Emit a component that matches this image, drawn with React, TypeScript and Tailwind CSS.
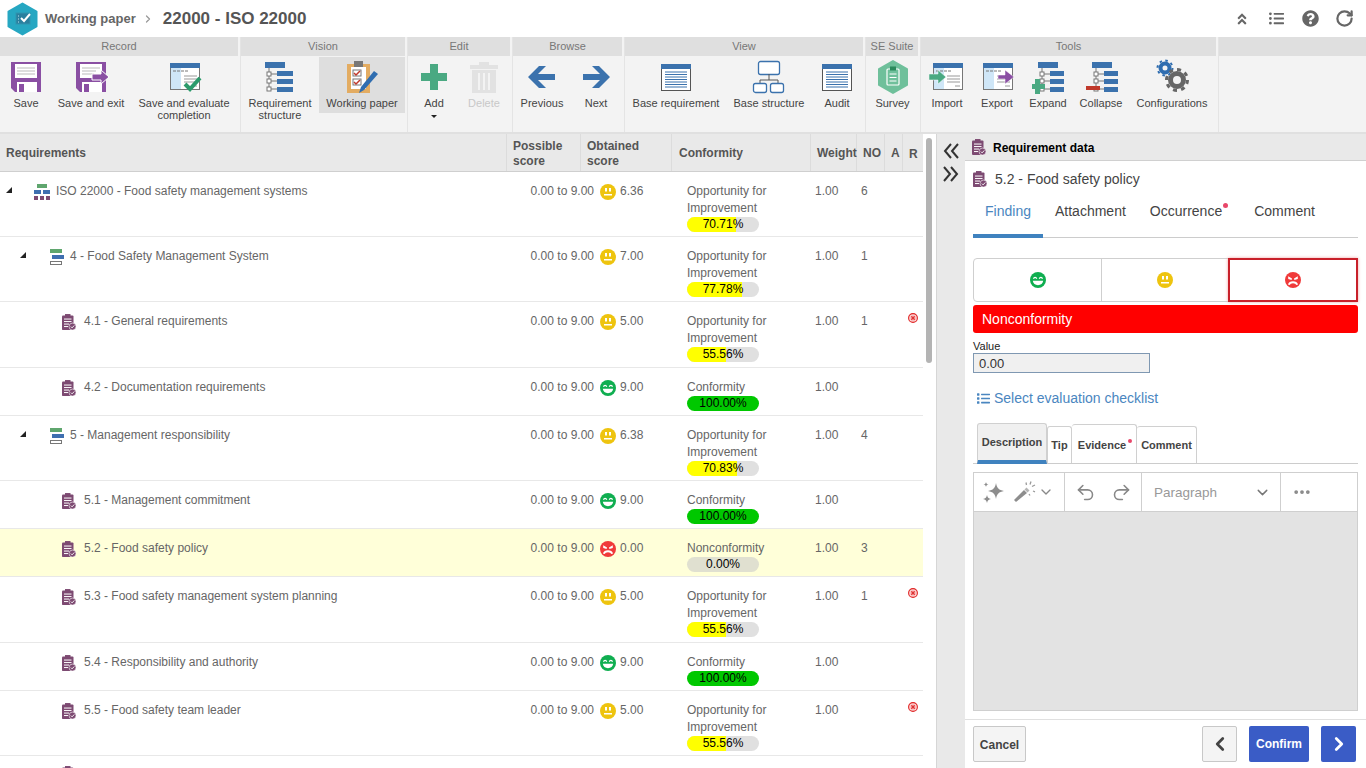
import React from "react";
import { ChevronDown, Undo2, Redo2, Ellipsis, ChevronLeft, ChevronRight, ChevronRight as Crumb, RotateCw } from "lucide-react";
import { FaAngleDoubleUp, FaListUl, FaList, FaQuestionCircle } from "react-icons/fa";

const BLUE = "#3b72ad";
const PURPLE = "#8a4fa3";
const GREEN = "#4aa982";

const Box = ({ children }: { children: React.ReactNode }) => (
  <svg width="36" height="36" viewBox="0 0 36 36">{children}</svg>
);

const TreeBase = ({ w = 16 }: { w?: number }) => (
  <g>
    <rect x="0" y="3" width="20" height="6" fill={BLUE} />
    <path d="M4 9V31M4 15h8M4 22h8M4 30h8" stroke="#777" fill="none" />
    <rect x="2" y="13" width="4" height="4" fill="#fff" stroke="#777" />
    <rect x="2" y="20" width="4" height="4" fill="#fff" stroke="#777" />
    <rect x="2" y="28" width="4" height="4" fill="#fff" stroke="#777" />
    <rect x="12" y="12" width={w} height="5" fill={BLUE} />
    <rect x="12" y="20" width={w} height="5" fill={BLUE} />
    <rect x="12" y="28" width={w} height="5" fill={BLUE} />
  </g>
);
const Window = ({ side }: { side?: boolean }) => (
  <g>
    <rect x="4.500" y="4.500" width="29" height="26" fill="#fff" stroke="#777" />
    <rect x="4" y="4" width="30" height="5" fill={BLUE} />
    {side && <rect x="5" y="9" width="10" height="21" fill="#cfe6f7" />}
    <path d="M7 12h3M11 12h3M15 12h3M19 12h3" stroke="#777" />
    <path d="M18 17h13M18 20h13M18 23h13M26 27h5" stroke="#999" />
  </g>
);
const Lined = () => (
  <g>
    <rect x="3.500" y="5.500" width="29" height="26" fill="#fff" stroke="#555" />
    <rect x="3" y="5" width="30" height="5" fill={BLUE} />
    <path d="M7 13h22M7 15.500h22M7 18h22M7 20.500h22M7 23h22M7 25.500h22M7 28h22" stroke={BLUE} />
  </g>
);

const icons: Record<string, React.ReactNode> = {
  save: (
    <Box>
      <path d="M3 3h30v30H7l-4-4z" fill={PURPLE} />
      <rect x="7" y="5" width="22" height="14" fill="#fff" />
      <path d="M9 9h18M9 12h18M9 15h18" stroke="#bbb" />
      <rect x="9" y="23" width="20" height="10" fill="#fff" />
      <rect x="11" y="25" width="5" height="8" fill={PURPLE} />
    </Box>
  ),
  saveExit: (
    <Box>
      <path d="M3 3h30v30H7l-4-4z" fill={PURPLE} />
      <rect x="7" y="5" width="22" height="14" fill="#fff" />
      <path d="M9 9h18M9 12h14M9 15h12" stroke="#bbb" />
      <rect x="9" y="23" width="20" height="10" fill="#fff" />
      <rect x="11" y="25" width="5" height="8" fill={PURPLE} />
      <path d="M19 15h9v-4l8 7-8 7v-4h-9z" fill={PURPLE} stroke="#fff" />
    </Box>
  ),
  saveEval: (
    <Box>
      <Window side />
      <path d="M19 25l5 5 10-11" stroke="#2b9a6b" strokeWidth="4" fill="none" />
    </Box>
  ),
  reqStruct: <Box><g transform="translate(3 0)"><TreeBase /></g></Box>,
  workingPaper: (
    <Box>
      <rect x="3" y="5" width="23" height="29" fill="#e3ac62" />
      <rect x="7" y="8" width="15" height="22" fill="#fff" />
      <rect x="10" y="2" width="9" height="6" fill="#777" />
      <rect x="9" y="11" width="8" height="6" fill="#fff" stroke="#777" />
      <rect x="9" y="20" width="8" height="6" fill="#fff" stroke="#777" />
      <path d="M10 14l2 2 4-4M10 23l2 2 4-4" stroke="#c0392b" strokeWidth="1.500" fill="none" />
      <path d="M15 34l2-6L30 12l4 3-14 16z" fill="#2f6db0" />
    </Box>
  ),
  add: <Box><path d="M14 5h8v9h9v8h-9v9h-8v-9H5v-8h9z" fill={GREEN} /></Box>,
  del: (
    <Box>
      <rect x="4" y="6" width="28" height="4" fill="#e2e2e2" />
      <rect x="13" y="3" width="10" height="4" fill="#e2e2e2" />
      <path d="M6 11h24v23H6z" fill="#e2e2e2" />
      <path d="M13 14v17M18 14v17M23 14v17" stroke="#f3f3f3" strokeWidth="2" />
    </Box>
  ),
  prev: <Box><path d="M4 18L15 7h7l-8 8h17v6H14l8 8h-7z" fill={BLUE} /></Box>,
  next: <Box><path d="M32 18L21 7h-7l8 8H5v6h17l-8 8h7z" fill={BLUE} /></Box>,
  base: <Box><Lined /></Box>,
  baseStruct: (
    <Box>
      <rect x="7.500" y="2.500" width="21" height="13" rx="2" fill="#fff" stroke={BLUE} strokeWidth="1.300" />
      <path d="M18 15v6M9 21h18M9 21v3M27 21v3" stroke="#555" fill="none" />
      <rect x="2.500" y="24.500" width="13" height="9" rx="2" fill="#fff" stroke={BLUE} strokeWidth="1.300" />
      <rect x="19.500" y="24.500" width="13" height="9" rx="2" fill="#fff" stroke={BLUE} strokeWidth="1.300" />
    </Box>
  ),
  survey: (
    <Box>
      <path d="M18 2l14 8v16l-14 8-14-8V10z" fill="#6fc09b" stroke="#6fc09b" strokeWidth="2" strokeLinejoin="round" />
      <rect x="12" y="10" width="12" height="16" rx="1" fill="none" stroke="#fff" strokeWidth="1.200" />
      <rect x="15" y="7.500" width="6" height="4" fill="#2b8a5c" />
      <path d="M14.500 15h7M14.500 18.500h7M14.500 22h7" stroke="#fff" />
    </Box>
  ),
  importI: (
    <Box>
      <Window side />
      <path d="M0 15h9v-4l8 7-8 7v-4H0z" fill={GREEN} stroke="#fff" strokeWidth=".5" />
    </Box>
  ),
  exportI: (
    <Box>
      <Window side />
      <path d="M19 16h7v-5l9 7-9 7v-5h-7z" fill={PURPLE} stroke="#fff" strokeWidth=".5" />
    </Box>
  ),
  expand: (
    <Box>
      <g transform="translate(8 0)"><TreeBase w={14} /></g>
      <path d="M5 22h5v5h5v5h-5v5H5v-5H2v-5h3z" fill={GREEN} transform="translate(0 -2)" />
    </Box>
  ),
  collapse: (
    <Box>
      <g transform="translate(9 0)"><TreeBase w={14} /></g>
      <rect x="3" y="27" width="14" height="4" fill="#c0392b" />
    </Box>
  ),
  config: (
    <Box>
      <circle cx="11" cy="9" r="4.500" fill="none" stroke="#2f6db0" strokeWidth="4" />
      <circle cx="11" cy="9" r="7.500" fill="none" stroke="#2f6db0" strokeWidth="2" strokeDasharray="2.500 3.400" />
      <circle cx="23" cy="21" r="6.500" fill="none" stroke="#666" strokeWidth="5" />
      <circle cx="23" cy="21" r="10.500" fill="none" stroke="#666" strokeWidth="3" strokeDasharray="4 4.200" />
    </Box>
  ),
};

type Item = { k: string; w: number; label: React.ReactNode; dim?: boolean; active?: boolean; caret?: boolean };
const groups: { title: string; w: number; items: Item[] }[] = [
  { title: "Record", w: 241, items: [
    { k: "save", w: 52, label: "Save" },
    { k: "saveExit", w: 78, label: "Save and exit" },
    { k: "saveEval", w: 108, label: <>Save and evaluate<br />completion</> },
  ] },
  { title: "Vision", w: 167, items: [
    { k: "reqStruct", w: 78, label: <>Requirement<br />structure</> },
    { k: "workingPaper", w: 86, label: "Working paper", active: true },
  ] },
  { title: "Edit", w: 105, items: [
    { k: "add", w: 52, label: "Add", caret: true },
    { k: "del", w: 48, label: "Delete", dim: true },
  ] },
  { title: "Browse", w: 112, items: [
    { k: "prev", w: 58, label: "Previous" },
    { k: "next", w: 50, label: "Next" },
  ] },
  { title: "View", w: 241, items: [
    { k: "base", w: 102, label: "Base requirement" },
    { k: "baseStruct", w: 84, label: "Base structure" },
    { k: "base", w: 52, label: "Audit" },
  ] },
  { title: "SE Suite", w: 55, items: [{ k: "survey", w: 53, label: "Survey" }] },
  { title: "Tools", w: 298, items: [
    { k: "importI", w: 52, label: "Import" },
    { k: "exportI", w: 48, label: "Export" },
    { k: "expand", w: 54, label: "Expand" },
    { k: "collapse", w: 52, label: "Collapse" },
    { k: "config", w: 90, label: "Configurations" },
  ] },
];

const Face = ({ kind, size = 16 }: { kind: "g" | "y" | "r"; size?: number }) => {
  const fill = kind === "g" ? "#0fae50" : kind === "y" ? "#eec40f" : "#f03a3a";
  return (
    <svg width={size} height={size} viewBox="0 0 16 16" className="shrink-0">
      <circle cx="8" cy="8" r="8" fill={fill} />
      {kind === "y" && (
        <>
          <rect x="5" y="4" width="2" height="3.500" fill="#fff" />
          <rect x="9" y="4" width="2" height="3.500" fill="#fff" />
          <rect x="4" y="10" width="8" height="1.500" fill="#fff" />
        </>
      )}
      {kind === "g" && (
        <>
          <path d="M3.500 6.800c.6-1.900 2.600-1.900 3.200 0M9.300 6.800c.6-1.900 2.600-1.900 3.200 0" stroke="#fff" strokeWidth="1.300" fill="none" />
          <path d="M2.800 8.800h10.400c-.3 2.800-2.400 4.400-5.200 4.400s-4.900-1.600-5.200-4.400z" fill="#fff" />
        </>
      )}
      {kind === "r" && (
        <>
          <path d="M3.200 4.200l3.800 2.300-.4 1.600-3.400-1.100zM12.800 4.200L9 6.500l.4 1.600 3.400-1.100z" fill="#fff" />
          <path d="M3.800 12.800c1.200-3.400 7.200-3.400 8.400 0" stroke="#fff" strokeWidth="1.800" fill="none" />
        </>
      )}
    </svg>
  );
};

const Clip = ({ size = 14 }: { size?: number }) => (
  <svg width={size} height={size * 1.15} viewBox="0 0 14 16" className="shrink-0">
    <rect x="0" y="1.500" width="11.500" height="14.500" rx="1" fill="#7d4a72" />
    <rect x="3" y="0" width="5.500" height="3" fill="#7d4a72" />
    <path d="M2 5h7.500M2 7.500h7.500M2 10h5M2 12.500h4" stroke="#fff" />
    <circle cx="10.500" cy="12.500" r="3.500" fill="#7d4a72" stroke="#fff" strokeWidth=".6" />
    <path d="M8.800 12.500l1.300 1.300 2.200-2.400" stroke="#fff" strokeWidth=".9" fill="none" />
  </svg>
);

const RootIcon = () => (
  <svg width="16" height="16" viewBox="0 0 16 16" className="shrink-0">
    <rect x="3" y="0" width="10" height="4" fill="#5fa66e" />
    <rect x="0" y="6" width="7" height="4" fill="#3f6fb0" />
    <rect x="9" y="6" width="7" height="4" fill="#3f6fb0" />
    <rect x="0" y="12" width="4" height="4" fill="#7d4a72" />
    <rect x="6" y="12" width="4" height="4" fill="#7d4a72" />
    <rect x="12" y="12" width="4" height="4" fill="#7d4a72" />
  </svg>
);
const SecIcon = () => (
  <svg width="14" height="16" viewBox="0 0 14 16" className="shrink-0">
    <rect x="0" y="0" width="12" height="4" fill="#5fa66e" />
    <rect x="2" y="6" width="12" height="4" fill="#3f6fb0" />
    <rect x=".5" y="12.500" width="11" height="3" fill="#fff" stroke="#777" />
  </svg>
);
const Tri = () => (
  <svg width="6" height="6" viewBox="0 0 6 6" className="shrink-0"><path d="M6 0v6H0z" fill="#222" /></svg>
);
const RMark = () => (
  <svg width="10" height="10" viewBox="0 0 10 10">
    <circle cx="5" cy="5" r="4.400" fill="#fbd5d5" stroke="#e02424" strokeWidth="1.100" />
    <circle cx="5" cy="5" r="2.500" fill="#ef4444" />
    <path d="M5 2v6M2 5h6" stroke="#fff" strokeWidth=".8" />
    <path d="M5 3.800v2.400M3.800 5h2.400" stroke="#d01010" strokeWidth="1.100" />
  </svg>
);

type Row = { lvl: 0 | 1 | 2; text: string; face: "g" | "y" | "r"; score: string; conf: "o" | "c" | "n"; pct: number; no?: string; r?: boolean; h: number; sel?: boolean };
const rows: Row[] = [
  { lvl: 0, text: "ISO 22000 - Food safety management systems", face: "y", score: "6.36", conf: "o", pct: 70.71, no: "6", h: 65 },
  { lvl: 1, text: "4 - Food Safety Management System", face: "y", score: "7.00", conf: "o", pct: 77.78, no: "1", h: 65 },
  { lvl: 2, text: "4.1 - General requirements", face: "y", score: "5.00", conf: "o", pct: 55.56, no: "1", r: true, h: 66 },
  { lvl: 2, text: "4.2 - Documentation requirements", face: "g", score: "9.00", conf: "c", pct: 100, h: 48 },
  { lvl: 1, text: "5 - Management responsibility", face: "y", score: "6.38", conf: "o", pct: 70.83, no: "4", h: 65 },
  { lvl: 2, text: "5.1 - Management commitment", face: "g", score: "9.00", conf: "c", pct: 100, h: 48 },
  { lvl: 2, text: "5.2 - Food safety policy", face: "r", score: "0.00", conf: "n", pct: 0, no: "3", h: 48, sel: true },
  { lvl: 2, text: "5.3 - Food safety management system planning", face: "y", score: "5.00", conf: "o", pct: 55.56, no: "1", r: true, h: 66 },
  { lvl: 2, text: "5.4 - Responsibility and authority", face: "g", score: "9.00", conf: "c", pct: 100, h: 48 },
  { lvl: 2, text: "5.5 - Food safety team leader", face: "y", score: "5.00", conf: "o", pct: 55.56, r: true, h: 65 },
];

const Bar = ({ pct, conf }: { pct: number; conf: Row["conf"] }) => (
  <div className={`relative h-[15px] w-[72px] overflow-hidden rounded-full ${pct === 0 ? "bg-[#e0e0d0]" : "bg-[#e0e0e0]"}`}>
    <div
      className={conf === "c" ? "h-full bg-[#00c800]" : "h-full bg-[#ffff00]"}
      style={{ width: `${pct === 100 ? 100 : Math.max(0, pct - 2)}%` }}
    />
    <div className="absolute inset-0 text-center text-[12px] leading-[15px] text-black">{pct.toFixed(2)}%</div>
  </div>
);

const HCell = ({ w, className = "pl-[6px]", children }: { w: number; className?: string; children: React.ReactNode }) => (
  <div className={`flex h-full shrink-0 items-center border-r border-[#dcdcdc] pt-[2px] leading-[15px] ${className}`} style={{ width: w }}>
    {children}
  </div>
);

const Chevrons = ({ dir }: { dir: "l" | "r" }) => (
  <svg width="16" height="16" viewBox="0 0 16 16" className="shrink-0">
    <path d={dir === "l" ? "M8 1L2 8l6 7M15 1L9 8l6 7" : "M1 1l6 7-6 7M8 1l6 7-6 7"} stroke="#333" strokeWidth="2" fill="none" />
  </svg>
);

export default function App() {
  return (
    <div className="flex h-screen w-full flex-col overflow-hidden bg-white font-['Liberation_Sans',Arial,sans-serif] text-[12px] text-[#666]">
      {/* title bar */}
      <div className="flex h-[37px] shrink-0 items-center pl-[7px] pr-[12px]">
        <svg width="31" height="34" viewBox="0 0 31 34" className="shrink-0">
          <path d="M15.500 1.500l14 8v15l-14 8-14-8v-15z" fill="#26a7c2" stroke="#26a7c2" strokeWidth="2" strokeLinejoin="round" />
          <rect x="9" y="11" width="14" height="11" fill="#2a7f9e" stroke="#2f95b0" />
          <path d="M14 16l3 3 6-7" stroke="#fff" strokeWidth="2" fill="none" />
          <path d="M11 14h1M11 17h1M11 20h1" stroke="#bfe6ef" />
        </svg>
        <span className="ml-[7px] text-[13px] font-bold text-[#666]">Working paper</span>
        <Crumb size={12} strokeWidth={2.500} className="ml-[6px] text-[#999]" />
        <span className="ml-[9px] text-[17px] font-bold text-[#555]">22000 - ISO 22000</span>
        <div className="ml-auto flex items-center text-[#666]">
          <FaAngleDoubleUp size={14} />
          <FaListUl size={15} className="ml-[20px]" />
          <FaQuestionCircle size={17} className="ml-[18px]" />
          <RotateCw size={19} strokeWidth={2.800} className="ml-[16px]" />
        </div>
      </div>

      {/* ribbon */}
      <div className="flex h-[97px] shrink-0 border-b-2 border-[#e0e0e0] bg-[#f3f3f3]">
        {groups.map((g) => (
          <div key={g.title} className="flex shrink-0 flex-col border-r border-[#e4e4e4] pr-[1px]" style={{ width: g.w }}>
            <div className="mr-[1px] h-[19px] bg-[#dfdfdf] text-center text-[11px] leading-[19px] text-[#777]">{g.title}</div>
            <div className="flex flex-1 pt-[1px]">
              {g.items.map((it, i) => (
                <div key={i} className="shrink-0 text-center text-[11px] leading-[12px]" style={{ width: it.w }}>
                  <div className={it.active ? "h-[56px] bg-[#dedede]" : "h-[56px]"}>
                    <div className="flex h-[38px] items-center justify-center pt-[2px]">{icons[it.k]}</div>
                    <div className={`mt-[2px] ${it.dim ? "text-[#c8c8c8]" : "text-[#444]"}`}>{it.label}</div>
                  </div>
                  {it.caret && <div className="mx-auto mt-[2px] h-0 w-0 border-x-[3px] border-t-[3px] border-x-transparent border-t-[#222]" />}
                </div>
              ))}
            </div>
          </div>
        ))}
        <div className="flex-1">
          <div className="h-[19px] bg-[#dfdfdf]" />
        </div>
      </div>

      {/* main */}
      <div className="flex min-h-0 flex-1">
        {/* table */}
        <div className="flex w-[923px] shrink-0 flex-col overflow-hidden">
          <div className="flex h-[38px] shrink-0 border-b border-[#cfcfcf] bg-[#e9e9e9] font-bold text-[#555]">
            <HCell w={507}>Requirements</HCell>
            <HCell w={74}>Possible<br />score</HCell>
            <HCell w={91}>Obtained<br />score</HCell>
            <HCell w={139} className="pl-[7px]">Conformity</HCell>
            <HCell w={46} className="pl-[6px]">Weight</HCell>
            <HCell w={28} className="pl-[6px]">NO</HCell>
            <HCell w={18}>A</HCell>
            <div className="pl-[6px] pt-[2px] leading-[36px]">R</div>
          </div>
          {rows.map((r) => (
            <div
              key={r.text}
              className={`flex shrink-0 border-b border-[#e8e8e8] pt-[11px] leading-[17px] ${r.sel ? "bg-[#ffffd9]" : ""}`}
              style={{ height: r.h }}
            >
              <div className="flex w-[507px] shrink-0 items-start">
                {r.lvl === 0 && (
                  <>
                    <div className="ml-[6px] mt-[4px]"><Tri /></div>
                    <div className="ml-[22px] mt-[1px]"><RootIcon /></div>
                    <span className="ml-[6px]">{r.text}</span>
                  </>
                )}
                {r.lvl === 1 && (
                  <>
                    <div className="ml-[20px] mt-[4px]"><Tri /></div>
                    <div className="ml-[24px] mt-[1px]"><SecIcon /></div>
                    <span className="ml-[6px]">{r.text}</span>
                  </>
                )}
                {r.lvl === 2 && (
                  <>
                    <div className="ml-[62px] mt-[1px]"><Clip /></div>
                    <span className="ml-[8px]">{r.text}</span>
                  </>
                )}
              </div>
              <div className="w-[87px] shrink-0 text-right">0.00 to 9.00</div>
              <div className="ml-[6px] mt-[1px]"><Face kind={r.face} /></div>
              <div className="ml-[4px] w-[67px] shrink-0">{r.score}</div>
              <div className="w-[128px] shrink-0">
                {r.conf === "o" && <div>Opportunity for<br />Improvement</div>}
                {r.conf === "c" && <div>Conformity</div>}
                {r.conf === "n" && <div>Nonconformity</div>}
                <Bar pct={r.pct} conf={r.conf} />
              </div>
              <div className="w-[46px] shrink-0">1.00</div>
              <div className="w-[47px] shrink-0">{r.no}</div>
              {r.r && <div><RMark /></div>}
            </div>
          ))}
          <div className="shrink-0 pl-[62px] pt-[10px]"><Clip /></div>
        </div>

        {/* scrollbar */}
        <div className="w-[14px] shrink-0 border-r border-[#d6d6d6] pl-[3px] pt-[4px]">
          <div className="h-[225px] w-[6px] rounded-[3px] bg-[#b4b4b4]" />
        </div>

        {/* collapse */}
        <div className="flex w-[28px] shrink-0 flex-col items-center gap-[7px] bg-[#e9e9e9] pt-[9px]">
          <Chevrons dir="l" />
          <Chevrons dir="r" />
        </div>

        {/* right panel */}
        <div className="flex min-w-0 flex-1 flex-col">
          <div className="flex h-[27px] shrink-0 items-center border-b border-[#d0d0d0] bg-[#e9e9e9] pl-[7px] pt-[1px] font-bold text-black">
            <Clip />
            <span className="ml-[7px]">Requirement data</span>
          </div>
          <div className="flex flex-1 flex-col px-[8px]">
            <div className="flex h-[37px] shrink-0 items-center pb-[1px] text-[14px] text-[#444]">
              <Clip />
              <span className="ml-[8px]">5.2 - Food safety policy</span>
            </div>
            <div className="flex h-[40px] shrink-0 border-b border-[#ccc] text-[14px] text-[#444]">
              <div className="-mb-[1px] flex w-[70px] shrink-0 justify-center border-b-4 border-[#3f82bf] pt-[3px] text-[#4a86c0]">Finding</div>
              <div className="ml-[12px] pt-[3px]">Attachment</div>
              <div className="relative ml-[24px] pt-[3px]">
                Occurrence
                <span className="absolute -right-[6px] top-[5px] h-[5px] w-[5px] rounded-full bg-[#e8476a]" />
              </div>
              <div className="ml-[32px] pt-[3px]">Comment</div>
            </div>

            <div className="mt-[20px] flex h-[44px] shrink-0 rounded-[4px] border border-[#cfcfcf]">
              <div className="flex w-[128px] shrink-0 items-center justify-center border-r border-[#cfcfcf]"><Face kind="g" /></div>
              <div className="flex w-[126px] shrink-0 items-center justify-center"><Face kind="y" /></div>
              <div className="-my-[1px] -mr-[1px] flex flex-1 items-center justify-center border-2 border-[#c8202a] shadow-[0_0_3px_#f0a0a0]"><Face kind="r" /></div>
            </div>
            <div className="mt-[3px] h-[28px] shrink-0 rounded-[3px] bg-[#ff0000] pl-[9px] text-[14px] leading-[28px] text-white">Nonconformity</div>
            <div className="mt-[7px] text-[11px] leading-[12px] text-[#222]">Value</div>
            <div className="mt-[1px] h-[20px] w-[177px] shrink-0 border border-[#7f98b2] bg-[#f0f0f0] pl-[5px] text-[13px] leading-[19px] text-[#333]">0.00</div>
            <div className="mt-[16px] flex h-[18px] shrink-0 items-center pl-[4px] text-[14px] text-[#4a86c0]">
              <FaList size={13} />
              <span className="ml-[4px]">Select evaluation checklist</span>
            </div>

            <div className="mt-[16px] flex h-[41px] shrink-0 items-end border-b border-[#ccc] pl-[4px] text-[11px] font-bold text-[#444]">
              <div className="-mb-[1px] flex h-[41px] w-[70px] shrink-0 items-center justify-center rounded-t-[3px] border border-b-4 border-[#d0d0d0] border-b-[#3f82bf] bg-[#f0f0f0]">Description</div>
              <div className="flex h-[37px] w-[25px] shrink-0 items-center justify-center rounded-t-[3px] border border-b-0 border-[#d0d0d0] pt-[1px]">Tip</div>
              <div className="relative flex h-[39px] w-[65px] shrink-0 items-center justify-center rounded-t-[3px] border border-b-0 border-l-0 border-[#d0d0d0] pr-[4px] pt-[3px]">
                Evidence
                <span className="absolute right-[4px] top-[14px] h-[4px] w-[4px] rounded-full bg-[#e8476a]" />
              </div>
              <div className="flex h-[37px] w-[60px] shrink-0 items-center justify-center rounded-t-[3px] border border-b-0 border-l-0 border-[#d0d0d0] pt-[1px]">Comment</div>
            </div>

            <div className="mt-[8px] flex h-[40px] shrink-0 items-center border border-[#cfcfcf] text-[#888]">
              <div className="flex h-full w-[91px] shrink-0 items-center border-r border-[#cfcfcf] pl-[7px]">
                <svg width="26" height="26" viewBox="0 0 26 26" className="shrink-0">
                  <path d="M15 4c.9 5.200 2.800 7.100 8 8-5.200.9-7.100 2.800-8 8-.9-5.200-2.800-7.100-8-8 5.200-.9 7.100-2.800 8-8z" fill="#8d8d8d" />
                  <path d="M6 16c.4 2.500 1.500 3.600 4 4-2.500.4-3.600 1.500-4 4-.4-2.500-1.500-3.600-4-4 2.500-.4 3.600-1.500 4-4zM5 3c.3 1.600.9 2.200 2.500 2.500C5.900 5.800 5.300 6.400 5 8c-.3-1.600-.9-2.200-2.500-2.500C4.100 5.200 4.700 4.600 5 3z" fill="#8d8d8d" />
                </svg>
                <svg width="24" height="24" viewBox="0 0 24 24" className="ml-[6px] shrink-0">
                  <path d="M3 22l-2-2L11 10l3 3z" fill="#8d8d8d" />
                  <path d="M11.500 9.500l2-2 3 3-2 2z" fill="#b5b5b5" />
                  <path d="M13 2.500l.5 2.500M18 1.500l-1 3M22 5l-3 1.500M20 11l2 .8M16 14l1 1.500" stroke="#9a9a9a" strokeWidth="1.300" fill="none" />
                </svg>
                <ChevronDown size={16} className="ml-[1px] shrink-0" />
              </div>
              <div className="flex h-full w-[77px] shrink-0 items-center justify-center gap-[15px] border-r border-[#cfcfcf]">
                <Undo2 size={21} strokeWidth={1.800} />
                <Redo2 size={21} strokeWidth={1.800} />
              </div>
              <div className="flex h-full w-[139px] shrink-0 items-center border-r border-[#cfcfcf] pl-[12px] pr-[9px] pt-[3px] text-[13.5px] text-[#999]">
                Paragraph
                <ChevronDown size={17} className="-mt-[3px] ml-auto text-[#777]" />
              </div>
              <Ellipsis size={20} className="ml-[11px]" strokeWidth={2.500} />
            </div>
            <div className="h-[199px] shrink-0 border-x border-b border-[#cfcfcf] bg-[#e3e3e3]" />
          </div>
          <div className="flex h-[49px] shrink-0 items-start border-t border-[#e0e0e0] pl-[8px] pr-[10px] pt-[6px]">
            <div className="flex h-[36px] w-[53px] items-center justify-center rounded-[2px] border border-[#c8c8c8] bg-[#f4f4f4] pt-[1px] font-bold text-[#444]">Cancel</div>
            <div className="ml-auto flex h-[36px] w-[35px] items-center justify-center rounded-[2px] border border-[#c8c8c8] bg-[#f4f4f4] text-[#444]">
              <ChevronLeft size={22} strokeWidth={3} />
            </div>
            <div className="ml-[12px] flex h-[36px] w-[60px] items-center justify-center rounded-[2px] bg-[#3a5cc6] font-bold text-white">Confirm</div>
            <div className="ml-[12px] flex h-[36px] w-[35px] items-center justify-center rounded-[2px] bg-[#3a5cc6] text-white">
              <ChevronRight size={22} strokeWidth={3} />
            </div>
          </div>
        </div>
      </div>
    </div>
  );
}
